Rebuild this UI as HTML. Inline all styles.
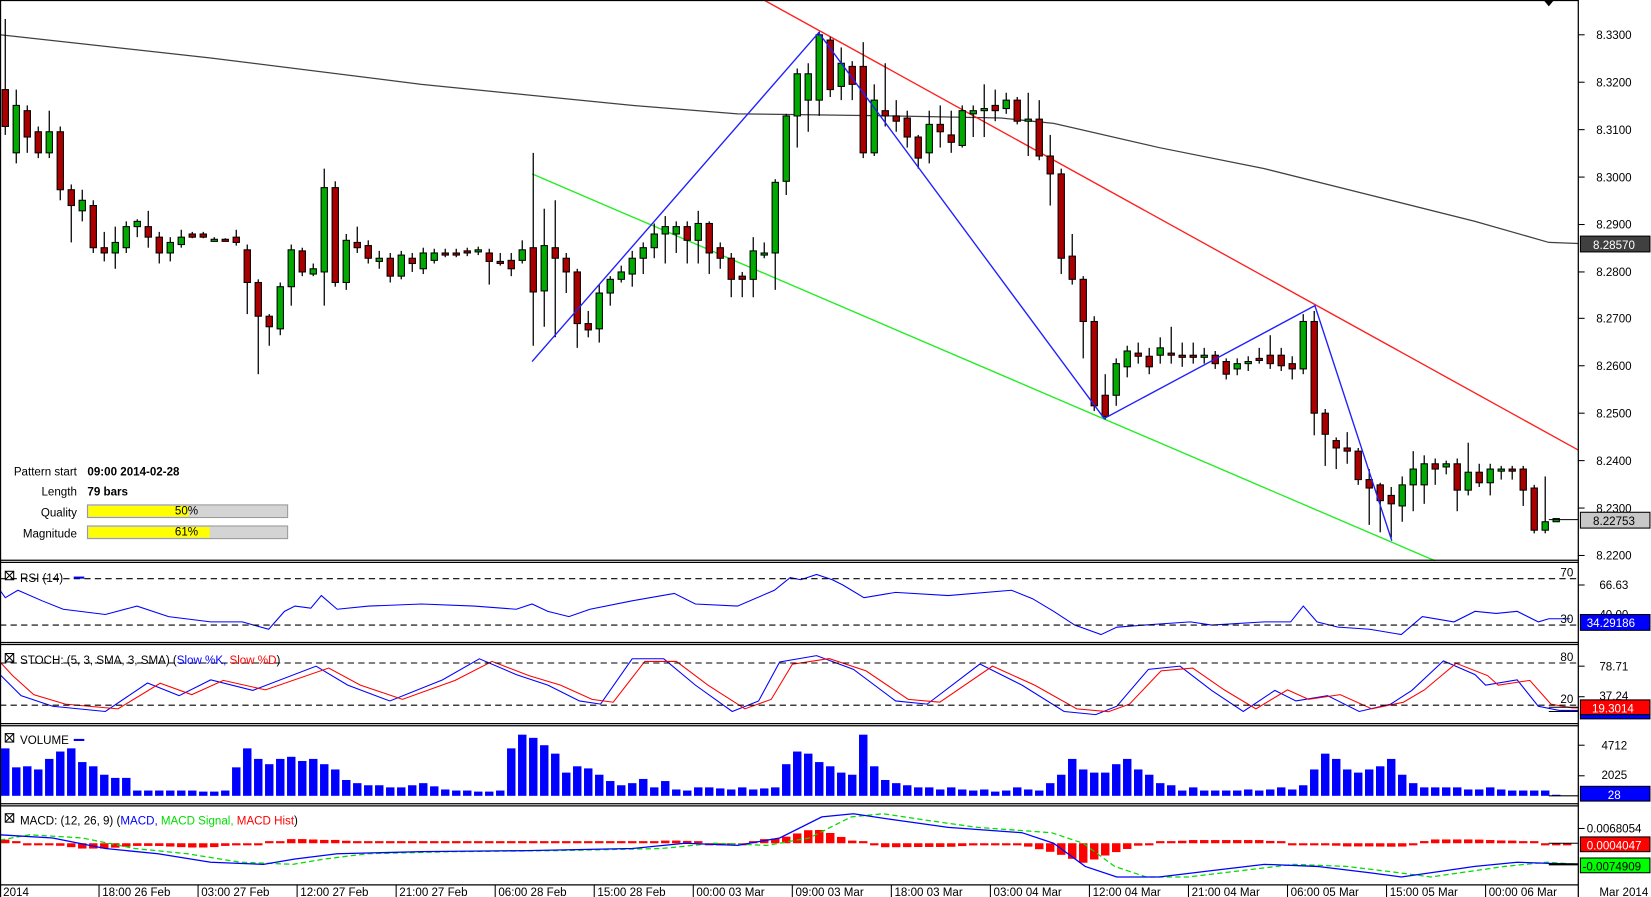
<!DOCTYPE html>
<html><head><meta charset="utf-8"><style>
html,body{margin:0;padding:0;background:#fff;overflow:hidden}
svg{display:block}
text{font-family:"Liberation Sans",sans-serif;font-size:11px;fill:#000}
</style></head><body>
<svg id="s" width="1651" height="897" viewBox="0 0 1567 851" preserveAspectRatio="none" xmlns="http://www.w3.org/2000/svg">
<rect width="1567" height="851" fill="#fff"/>
<g id="dyn"></g>
<g stroke="#000" stroke-width="1.2" fill="none">
<line x1="0.5" y1="0" x2="0.5" y2="851"/>
<line x1="0" y1="0.5" x2="1498" y2="0.5"/>
<line x1="1498" y1="0" x2="1498" y2="851"/>
<line x1="0" y1="531.5" x2="1498" y2="531.5"/>
<line x1="0" y1="533.5" x2="1498" y2="533.5"/>
<line x1="0" y1="609.5" x2="1498" y2="609.5"/>
<line x1="0" y1="611.5" x2="1498" y2="611.5"/>
<line x1="0" y1="686.5" x2="1498" y2="686.5"/>
<line x1="0" y1="688.5" x2="1498" y2="688.5"/>
<line x1="0" y1="762.5" x2="1498" y2="762.5"/>
<line x1="0" y1="764.5" x2="1498" y2="764.5"/>
<line x1="0" y1="839.5" x2="1498" y2="839.5"/>
</g>
<polygon points="1465,0 1475,0 1470,6" fill="#000"/>
<g stroke="#000" stroke-dasharray="6,4" stroke-width="1">
<line x1="0" y1="549" x2="1498" y2="549"/>
<line x1="0" y1="593" x2="1498" y2="593"/>
<line x1="0" y1="629" x2="1498" y2="629"/>
<line x1="0" y1="669" x2="1498" y2="669"/>
</g>
<g stroke="#000"><line x1="1498" y1="33" x2="1504" y2="33"/><line x1="1498" y1="78" x2="1504" y2="78"/><line x1="1498" y1="123" x2="1504" y2="123"/><line x1="1498" y1="168" x2="1504" y2="168"/><line x1="1498" y1="213" x2="1504" y2="213"/><line x1="1498" y1="258" x2="1504" y2="258"/><line x1="1498" y1="302" x2="1504" y2="302"/><line x1="1498" y1="347" x2="1504" y2="347"/><line x1="1498" y1="392" x2="1504" y2="392"/><line x1="1498" y1="437" x2="1504" y2="437"/><line x1="1498" y1="482" x2="1504" y2="482"/><line x1="1498" y1="527" x2="1504" y2="527"/>
<line x1="1498" y1="555" x2="1504" y2="555"/><line x1="1498" y1="632" x2="1504" y2="632"/><line x1="1498" y1="661" x2="1504" y2="661"/><line x1="1498" y1="707" x2="1504" y2="707"/><line x1="1498" y1="736" x2="1504" y2="736"/><line x1="1498" y1="786" x2="1504" y2="786"/></g>
<g>
<text x="1515" y="37">8.3300</text><text x="1515" y="82">8.3200</text><text x="1515" y="127">8.3100</text><text x="1515" y="172">8.3000</text><text x="1515" y="217">8.2900</text><text x="1515" y="262">8.2800</text><text x="1515" y="306">8.2700</text><text x="1515" y="351">8.2600</text><text x="1515" y="396">8.2500</text><text x="1515" y="441">8.2400</text><text x="1515" y="486">8.2300</text><text x="1515" y="531">8.2200</text>
</g>
<rect x="1500" y="224" width="66" height="15" fill="#404040" stroke="#000"/><text x="1512" y="236" style="fill:#fff">8.28570</text>
<line x1="1470" y1="493" x2="1498" y2="493" stroke="#000"/>
<rect x="1500" y="486" width="66" height="15" fill="#c8c8c8" stroke="#000"/><text x="1512" y="498">8.22753</text>
<text x="1481" y="547">70</text><text x="1518" y="559">66.63</text><text x="1518" y="587">40.00</text><text x="1481" y="591">30</text>
<rect x="1500" y="583" width="66" height="15" fill="#0000ff" stroke="#000"/><text x="1506" y="595" style="fill:#fff">34.29186</text>
<text x="1481" y="627">80</text><text x="1518" y="636">78.71</text><text x="1518" y="664">37.24</text><text x="1481" y="667">20</text>
<rect x="1500" y="664" width="66" height="14" fill="#ff0000" stroke="#000"/><text x="1511" y="676" style="fill:#fff">19.3014</text>
<rect x="1500" y="678" width="66" height="4" fill="#0000ff" stroke="#000"/>
<line x1="1470" y1="671" x2="1498" y2="671" stroke="#000"/><line x1="1470" y1="675" x2="1498" y2="675" stroke="#000"/>
<text x="1520" y="711">4712</text><text x="1520" y="739">2025</text>
<line x1="1470" y1="755" x2="1498" y2="755" stroke="#000"/>
<rect x="1500" y="746" width="66" height="14" fill="#0000ff" stroke="#000"/><text x="1526" y="758" style="fill:#fff">28</text>
<text x="1506" y="790">0.0068054</text>
<line x1="1470" y1="800" x2="1498" y2="800" stroke="#000"/>
<rect x="1500" y="794" width="66" height="14" fill="#ff0000" stroke="#000"/><text x="1506" y="806" style="fill:#fff">0.0004047</text>
<line x1="1470" y1="820" x2="1498" y2="820" stroke="#000" stroke-width="2"/>
<rect x="1500" y="814" width="66" height="14" fill="#00ff00" stroke="#000"/><text x="1502" y="826">-0.0074909</text>
<g font-size="11">
<rect x="5" y="542" width="8" height="8" fill="none" stroke="#000"/><path d="M5,542 L13,550 M13,542 L5,550" stroke="#000"/>
<text x="19" y="552">RSI (14)</text><line x1="70" y1="548" x2="80" y2="548" stroke="#0000ff" stroke-width="2"/>
<rect x="5" y="620" width="8" height="8" fill="none" stroke="#000"/><path d="M5,620 L13,628 M13,620 L5,628" stroke="#000"/>
<text x="19" y="630">STOCH: (5, 3, SMA, 3, SMA) (<tspan style="fill:#0000ff">Slow %K,</tspan> <tspan style="fill:#ff0000">Slow %D</tspan>)</text>
<rect x="5" y="696" width="8" height="8" fill="none" stroke="#000"/><path d="M5,696 L13,704 M13,696 L5,704" stroke="#000"/>
<text x="19" y="706">VOLUME</text><line x1="70" y1="702" x2="80" y2="702" stroke="#0000ff" stroke-width="2"/>
<rect x="5" y="772" width="8" height="8" fill="none" stroke="#000"/><path d="M5,772 L13,780 M13,772 L5,780" stroke="#000"/>
<text x="19" y="782">MACD: (12, 26, 9) (<tspan style="fill:#0000ff">MACD,</tspan> <tspan style="fill:#00dd00">MACD Signal,</tspan> <tspan style="fill:#ff0000">MACD Hist</tspan>)</text>
</g>
<g>
<text x="3" y="850">2014</text>
<line x1="94" y1="840" x2="94" y2="851" stroke="#000"/><text x="97" y="850">18:00 26 Feb</text>
<line x1="188" y1="840" x2="188" y2="851" stroke="#000"/><text x="191" y="850">03:00 27 Feb</text>
<line x1="282" y1="840" x2="282" y2="851" stroke="#000"/><text x="285" y="850">12:00 27 Feb</text>
<line x1="376" y1="840" x2="376" y2="851" stroke="#000"/><text x="379" y="850">21:00 27 Feb</text>
<line x1="470" y1="840" x2="470" y2="851" stroke="#000"/><text x="473" y="850">06:00 28 Feb</text>
<line x1="564" y1="840" x2="564" y2="851" stroke="#000"/><text x="567" y="850">15:00 28 Feb</text>
<line x1="658" y1="840" x2="658" y2="851" stroke="#000"/><text x="661" y="850">00:00 03 Mar</text>
<line x1="752" y1="840" x2="752" y2="851" stroke="#000"/><text x="755" y="850">09:00 03 Mar</text>
<line x1="846" y1="840" x2="846" y2="851" stroke="#000"/><text x="849" y="850">18:00 03 Mar</text>
<line x1="940" y1="840" x2="940" y2="851" stroke="#000"/><text x="943" y="850">03:00 04 Mar</text>
<line x1="1034" y1="840" x2="1034" y2="851" stroke="#000"/><text x="1037" y="850">12:00 04 Mar</text>
<line x1="1128" y1="840" x2="1128" y2="851" stroke="#000"/><text x="1131" y="850">21:00 04 Mar</text>
<line x1="1222" y1="840" x2="1222" y2="851" stroke="#000"/><text x="1225" y="850">06:00 05 Mar</text>
<line x1="1316" y1="840" x2="1316" y2="851" stroke="#000"/><text x="1319" y="850">15:00 05 Mar</text>
<line x1="1410" y1="840" x2="1410" y2="851" stroke="#000"/><text x="1413" y="850">00:00 06 Mar</text>
<text x="1518" y="850">Mar 2014</text>
</g>
<g font-size="10">
<text x="73" y="451" text-anchor="end">Pattern start</text><text x="83" y="451" font-weight="bold">09:00 2014-02-28</text>
<text x="73" y="470" text-anchor="end">Length</text><text x="83" y="470" font-weight="bold">79 bars</text>
<text x="73" y="490" text-anchor="end">Quality</text>
<rect x="83" y="479" width="190" height="12" fill="#d4d4d4" stroke="#999"/><rect x="84" y="480" width="95" height="10" fill="#ffff00"/><text x="166" y="488">50%</text>
<text x="73" y="510" text-anchor="end">Magnitude</text>
<rect x="83" y="499" width="190" height="12" fill="#d4d4d4" stroke="#999"/><rect x="84" y="500" width="115" height="10" fill="#ffff00"/><text x="166" y="508">61%</text>
</g>
</svg>
<script>
var NS="http://www.w3.org/2000/svg",g=document.getElementById("dyn");
function el(t,a){var e=document.createElementNS(NS,t);for(var k in a)e.setAttribute(k,a[k]);g.appendChild(e);return e;}
function pl(pts,c,w,d){el("polyline",{points:pts.map(function(p){return p.join(",")}).join(" "),fill:"none",stroke:c,"stroke-width":w||1,"stroke-dasharray":d||"none"});}
function interp(pts,x){for(var i=1;i<pts.length;i++){if(x<=pts[i][0]){var a=pts[i-1],b=pts[i];return a[1]+(b[1]-a[1])*(x-a[0])/(b[0]-a[0]);}}return pts[pts.length-1][1];}
pl([[0,33],[200,55],[400,80],[600,100],[700,108],[850,110],[950,112],[1000,117],[1100,140],[1200,160],[1300,185],[1400,210],[1470,230],[1498,231]],"#404040",1.2);
pl([[725,0],[1498,427]],"#ff2020",1.3);
pl([[505,165],[1362,532]],"#22ee22",1.3);
var C=[[85,120,0,18,128],[100,145,1,85,155],[105,130,0,100,145],[125,145,0,120,150],[125,145,1,105,150],[125,180,0,120,190],[180,195,0,175,230],[190,200,1,180,210],[195,235,0,190,240],[235,240,0,220,248],[230,240,1,215,255],[215,235,1,210,240],[210,215,1,208,225],[215,225,0,200,235],[225,240,0,220,250],[230,240,1,225,248],[225,232,1,218,235],[222,225,0,220,226],[222,225,0,220,226],[227,228,1,225,229],[227,228,0,226,229],[225,230,0,218,233],[237,268,0,232,298],[268,300,0,265,355],[300,310,0,298,328],[272,312,1,268,318],[237,272,1,232,290],[238,258,0,235,262],[255,260,1,250,262],[178,258,1,160,290],[178,268,0,172,272],[228,268,1,222,275],[230,235,0,215,240],[233,245,0,228,250],[245,248,1,238,255],[245,262,0,240,268],[242,262,1,238,265],[245,250,0,240,258],[240,255,1,235,260],[240,247,1,236,250],[240,241,0,236,244],[240,241,0,236,244],[238,240,0,235,243],[237,239,1,234,242],[240,248,0,236,270],[248,250,0,240,252],[247,255,0,240,262],[237,247,1,228,250],[235,277,0,145,328],[233,276,1,198,310],[235,245,0,190,320],[245,258,0,240,278],[258,307,0,255,330],[307,313,0,295,320],[278,312,1,270,325],[265,278,1,262,290],[258,265,1,252,268],[245,260,1,238,272],[235,245,1,230,260],[222,235,1,212,245],[215,222,1,205,250],[215,222,1,210,240],[215,228,0,210,250],[212,228,1,200,250],[212,240,0,210,260],[235,245,0,230,255],[245,265,0,240,282],[262,265,0,258,282],[238,265,1,225,282],[240,241,1,230,245],[173,240,1,170,275],[110,172,1,108,185],[70,110,1,65,140],[70,95,1,60,125],[33,95,1,30,110],[38,85,0,35,92],[60,82,1,45,95],[63,80,0,58,95],[63,145,0,40,150],[95,145,1,80,148],[105,110,0,60,120],[110,115,0,95,125],[112,130,0,105,140],[130,150,0,128,160],[118,145,1,105,155],[118,125,0,100,140],[128,135,0,105,145],[105,138,1,100,140],[105,108,1,100,130],[103,105,1,80,130],[100,105,0,85,115],[95,103,1,88,108],[95,115,0,92,118],[113,115,1,88,148],[113,148,0,95,152],[148,165,0,128,195],[165,245,0,160,260],[243,265,0,222,270],[265,305,0,262,340],[305,385,0,300,390],[375,395,0,355,398],[345,375,1,340,385],[333,348,1,328,358],[335,338,0,325,345],[338,348,0,330,355],[330,337,1,320,345],[335,337,0,310,345],[337,338,0,325,348],[337,338,0,325,345],[337,339,1,330,345],[337,345,0,333,350],[343,355,0,340,360],[345,350,1,340,356],[343,345,1,338,352],[340,342,0,330,345],[337,345,0,318,350],[337,347,0,330,352],[345,350,0,338,360],[305,350,1,298,355],[305,392,0,295,413],[392,412,0,388,442],[418,425,0,415,445],[425,428,0,410,440],[428,455,0,425,460],[455,463,0,445,498],[460,475,0,458,505],[470,478,0,462,510],[460,480,1,452,495],[445,460,1,428,485],[440,460,1,432,478],[440,445,0,435,460],[440,443,1,437,450],[440,465,0,435,485],[448,465,1,420,470],[448,458,0,440,462],[445,458,1,440,470],[445,446,1,442,455],[445,447,0,442,455],[445,465,0,442,480],[463,503,0,460,506],[495,503,1,452,506],[492,495,1,492,495]];
for(var i=0;i<C.length;i++){var c=C[i],x=5+i*10.44,t=Math.min(c[0],c[1]),b=Math.max(c[0],c[1]);if(b-t<2)b=t+2;
el("line",{x1:x,y1:c[3],x2:x,y2:c[4],stroke:"#000","stroke-width":1.2});
el("rect",{x:x-3,y:t,width:6,height:b-t,fill:c[2]?"#00aa00":"#aa0000",stroke:"#000","stroke-width":1});}
pl([[505,343],[777,31],[1048,397],[1248,290],[1321,513]],"#2020ff",1.3);
pl([[0,560],[5,567],[17,560],[40,570],[60,578],[100,583],[130,575],[160,585],[200,590],[230,590],[255,597],[270,580],[280,575],[295,577],[305,565],[320,578],[350,575],[400,573],[450,575],[490,578],[505,573],[520,580],[540,585],[560,578],[600,570],[640,563],[660,573],[700,575],[735,560],[750,548],[760,550],[775,545],[790,550],[800,555],[820,567],[850,562],[900,565],[960,560],[980,568],[1000,580],[1020,593],[1045,602],[1060,595],[1100,592],[1130,590],[1150,593],[1200,590],[1225,590],[1237,575],[1250,590],[1270,595],[1300,597],[1330,602],[1350,585],[1380,590],[1400,580],[1420,582],[1440,580],[1460,590],[1470,587],[1490,587]],"#0000ff",1);
var K=[[0,640],[20,660],[50,670],[100,675],[140,648],[170,660],[200,645],[240,655],[300,632],[330,650],[370,665],[420,645],[455,625],[490,640],[520,650],[550,665],[570,668],[600,625],[630,625],[660,650],[695,675],[720,665],[740,628],[775,622],[810,635],[850,665],[880,668],[930,630],[970,650],[1010,675],[1040,678],[1060,670],[1090,635],[1120,632],[1150,655],[1180,675],[1210,655],[1230,665],[1260,660],[1290,675],[1320,668],[1340,655],[1370,627],[1400,640],[1410,650],[1440,645],[1460,670],[1480,674],[1498,674]];
pl(K,"#0000ff",1);
var D=K.map(function(p){return [p[0]+12,650+(p[1]-650)*0.9]});D.unshift([0,628]);D[D.length-1][0]=1498;
pl(D,"#ff0000",1);
var V=[45,27,28,25,35,42,45,32,28,20,17,17,5,5,5,5,5,5,4,4,5,27,45,35,30,35,37,33,35,30,25,15,12,10,10,8,8,10,12,9,6,5,5,4,4,5,45,58,55,48,40,22,28,26,20,14,10,12,16,8,14,6,5,8,8,7,6,8,6,7,8,30,42,40,32,28,22,20,58,28,15,12,10,8,8,6,8,6,5,6,4,5,8,6,5,12,20,35,25,22,22,30,35,25,20,12,10,5,8,5,5,5,5,6,5,6,8,6,10,25,40,35,25,22,25,28,35,20,12,8,8,8,8,6,6,8,6,5,5,5,5,1];
for(var i=0;i<V.length;i++){var x=5+i*10.44;el("rect",{x:x-4,y:755-V[i],width:8,height:V[i],fill:"#0000ff"});}
var M=[[0,792],[50,795],[100,805],[150,810],[200,818],[250,820],[280,815],[320,810],[400,808],[500,807],[600,805],[650,800],[700,802],[740,795],[780,775],[810,772],[850,778],[900,785],[970,790],[1000,800],[1030,822],[1060,832],[1100,832],[1150,826],[1200,820],[1250,822],[1300,828],[1330,832],[1400,822],[1440,818],[1498,820]];
var S=M.map(function(p){return [p[0]+28,p[1]]});S.unshift([0,797]);S[S.length-1][0]=1498;
for(var i=0;i<143;i++){var x=5+i*10.44,h=(interp(M,x)-interp(S,x))*0.9;if(Math.abs(h)<2)h=h<0?-2:2;
el("rect",{x:x-4,y:Math.min(800,800+h),width:8,height:Math.abs(h),fill:"#ff0000"});}
pl(S,"#00dd00",1.2,"5,3");
pl(M,"#0000ff",1.2);
</script>
</body></html>
